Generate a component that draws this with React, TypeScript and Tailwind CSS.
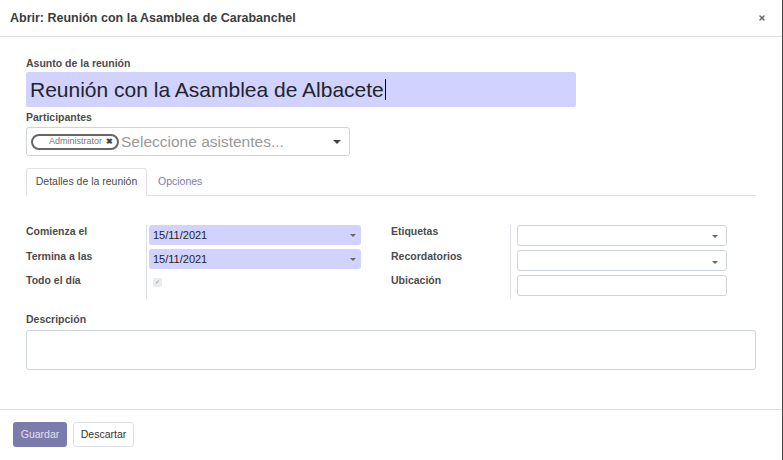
import { X } from "lucide-react";

const Caret = ({ small = false }: { small?: boolean }) => (
  <span
    className={
      small
        ? "ml-auto h-0 w-0 border-x-[3px] border-t-[3px] border-x-transparent border-t-[#666]"
        : "ml-auto h-0 w-0 border-x-[4px] border-t-[4px] border-x-transparent border-t-[#444]"
    }
  />
);

const FieldLabel = ({ children }: { children: React.ReactNode }) => (
  <div className="h-[24.5px] text-[10.5px] font-bold leading-[13px] text-[#4c4c4c]">{children}</div>
);

export default function App() {
  return (
    <div className="flex h-[460px] w-[783px] bg-[#444] font-['Liberation_Sans',Arial,sans-serif] text-[#4c4c4c]">
      <div className="flex w-[782px] flex-col bg-white">
        <header className="flex h-[37px] shrink-0 items-center border-b border-[#dee2e6] pl-[10px] pr-[16px]">
          <h1 className="text-[12.5px] font-bold text-[#3d3d3d]">Abrir: Reunión con la Asamblea de Carabanchel</h1>
          <button type="button" className="ml-auto text-[#666]">
            <X size={8} strokeWidth={4.5} />
          </button>
        </header>

        <main className="flex-1 px-[26px] pt-[20px]">
          <div className="text-[10.5px] font-bold leading-[13px]">Asunto de la reunión</div>
          <div className="mt-[2px] flex h-[35px] w-[550px] items-center rounded-[2px] bg-[#d2d2ff] px-[4px] text-[21px] text-[#212529]">
            Reunión con la Asamblea de Albacete
            <span className="ml-[1px] h-[21px] w-px bg-black" />
          </div>

          <div className="mt-[4px] text-[10.5px] font-bold leading-[13px]">Participantes</div>
          <div className="mt-[3px] flex h-[29px] w-[324px] items-center rounded-[3px] border border-[#ced4da] pl-[4px] pr-[8px]">
            <span className="flex h-[16px] w-[88px] items-center justify-end gap-[4px] rounded-full border-2 border-[#666] pr-[4px] text-[9px] text-[#777]">
              Administrator
              <span className="text-[8px] font-bold leading-none text-[#444]">✖</span>
            </span>
            <span className="ml-[2px] text-[15.5px] text-[#999]">Seleccione asistentes...</span>
            <Caret />
          </div>

          <nav className="mt-[12px] flex h-[28px] border-b border-[#dee2e6] text-[10.5px]">
            <div className="-mb-px flex w-[121px] items-center justify-center rounded-t-[3px] border border-b-white border-[#dee2e6] bg-white">
              Detalles de la reunión
            </div>
            <div className="flex items-center px-[11px] text-[#7c7bad]">Opciones</div>
          </nav>

          <div className="mt-[29px] grid grid-cols-[120px_245px_119px_217px] text-[11px]">
            <div className="flex flex-col">
              <FieldLabel>Comienza el</FieldLabel>
              <FieldLabel>Termina a las</FieldLabel>
              <FieldLabel>Todo el día</FieldLabel>
            </div>
            <div className="flex flex-col gap-[4px] border-l border-[#dee2e6] pb-[6px] pl-[2px] pr-[30px]">
              <div className="flex h-[20px] items-center rounded-[3px] bg-[#d2d2ff] px-[4px] pr-[5px] text-[#212529]">
                15/11/2021
                <Caret small />
              </div>
              <div className="flex h-[20px] items-center rounded-[3px] bg-[#d2d2ff] px-[4px] pr-[5px] text-[#212529]">
                15/11/2021
                <Caret small />
              </div>
              <div className="mt-[5px] ml-[4px] flex h-[9px] w-[9px] items-center justify-center rounded-[2px] bg-[#e9ecef] text-[6px] text-[#888]">
                ✓
              </div>
            </div>
            <div className="flex flex-col">
              <FieldLabel>Etiquetas</FieldLabel>
              <FieldLabel>Recordatorios</FieldLabel>
              <FieldLabel>Ubicación</FieldLabel>
            </div>
            <div className="flex flex-col gap-[4px] border-l border-[#dee2e6] pl-[6px]">
              <div className="flex h-[21px] items-center rounded-[3px] border border-[#ced4da] pr-[8px] pt-[2px]">
                <Caret small />
              </div>
              <div className="flex h-[21px] items-center rounded-[3px] border border-[#ced4da] pr-[8px] pt-[4px]">
                <Caret small />
              </div>
              <div className="h-[21px] rounded-[3px] border border-[#ced4da]" />
            </div>
          </div>

          <div className="mt-[14px] text-[10.5px] font-bold leading-[13px]">Descripción</div>
          <div className="mt-[4px] h-[40px] w-[730px] rounded-[3px] border border-[#ced4da]" />
        </main>

        <footer className="flex h-[51px] shrink-0 items-start gap-[6px] border-t border-[#dee2e6] px-[13px] pt-[12px] text-[10.5px]">
          <button type="button" className="h-[25px] w-[54px] rounded-[3px] bg-[#7c7bad] text-[#e0e0ee]">
            Guardar
          </button>
          <button type="button" className="h-[25px] w-[61px] rounded-[3px] border border-[#dee2e6] bg-white text-[#333]">
            Descartar
          </button>
        </footer>
      </div>
    </div>
  );
}
